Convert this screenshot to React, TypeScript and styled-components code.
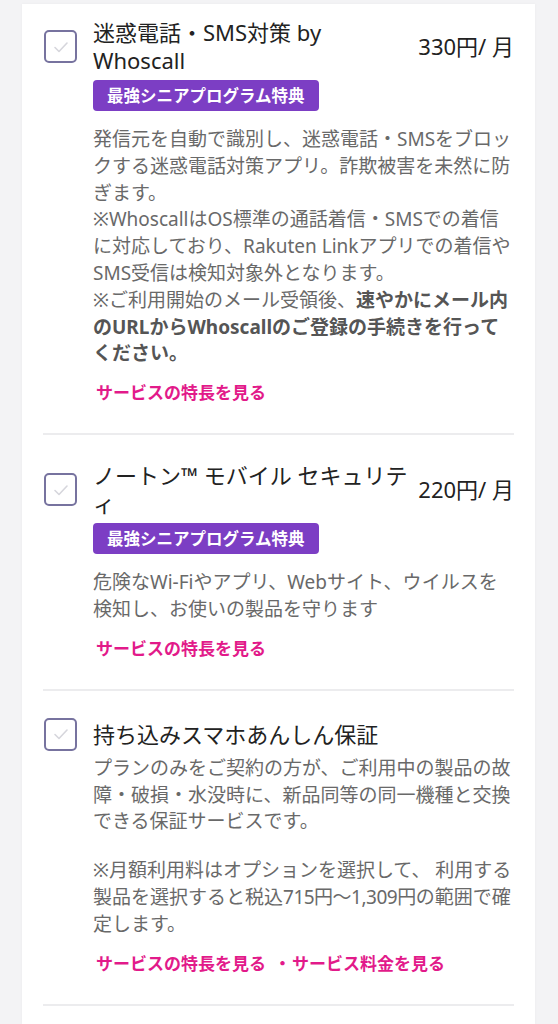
import React from 'react';
import styled, { createGlobalStyle } from 'styled-components';

const GlobalStyle = createGlobalStyle`
  html, body {
    margin: 0;
    padding: 0;
    background: #f3f3f5;
  }
  body {
    font-family: "Noto Sans", "Noto Sans CJK JP", sans-serif;
    -webkit-font-smoothing: antialiased;
  }
`;

const Page = styled.div`
  padding: 4px 23px 0 22px;
`;

const Card = styled.div`
  background: #fff;
  padding: 0 21px;
  min-height: calc(100vh - 4px);
  box-shadow: 0 0 3px rgba(0, 0, 0, 0.04);
`;

const Item = styled.div<{ first?: boolean }>`
  padding: ${props => (props.first ? '15px' : '27px')} 0 28px;
  border-bottom: 2px solid #ececee;
`;

const Header = styled.div`
  display: flex;
  align-items: center;
`;

const CheckboxBox = styled.div`
  flex-shrink: 0;
  box-sizing: border-box;
  width: 33px;
  height: 33px;
  margin-left: 1px;
  margin-right: 16px;
  border: 2px solid #77739f;
  border-radius: 5px;
  display: flex;
  align-items: center;
  justify-content: center;
`;

const Title = styled.div`
  flex: 1;
  font-size: 22px;
  line-height: 27.5px;
  color: #222;
  padding-right: 8px;
`;

const Price = styled.div`
  flex-shrink: 0;
  font-size: 22px;
  line-height: 27.5px;
  color: #222;
`;

const Body = styled.div`
  margin-left: 50px;
`;

const Badge = styled.div`
  display: inline-block;
  margin-top: 6px;
  padding: 0 14px;
  height: 31px;
  line-height: 31px;
  background: #7c3ec4;
  color: #fff;
  font-size: 16.5px;
  font-weight: 700;
  border-radius: 4px;
`;

const Desc = styled.div<{ tight?: boolean }>`
  margin-top: ${props => (props.tight ? '4px' : '15px')};
  font-size: 19px;
  line-height: 26.8px;
  color: #696969;

  p {
    margin: 0;
  }
  p + p {
    margin-top: 22px;
  }
  strong {
    color: #555;
    font-weight: 700;
  }
`;

const Num = styled.span`
  letter-spacing: -0.5px;
`;

const Links = styled.div`
  margin-top: 13px;
  font-size: 17px;
  line-height: 25px;
  font-weight: 700;
  color: #e21a8a;
  padding-left: 3px;
`;

const Link = styled.a`
  color: inherit;
  text-decoration: none;
`;

const Sep = styled.span`
  margin: 0 1px 0 8px;
`;

const Check = () => (
  <svg width="20" height="20" viewBox="0 0 20 20" fill="none">
    <path d="M4 10.5 L8 14.5 L16 6" stroke="#d6d6dc" strokeWidth="1.6" strokeLinecap="round" strokeLinejoin="round" />
  </svg>
);

type OptionProps = {
  first?: boolean;
  title: React.ReactNode;
  price?: string;
  badge?: string;
  children: React.ReactNode;
  tight?: boolean;
  links: string[];
};

const OptionItem = ({ first, title, price, badge, children, tight, links }: OptionProps) => (
  <Item first={first}>
    <Header>
      <CheckboxBox>
        <Check />
      </CheckboxBox>
      <Title>{title}</Title>
      {price && <Price>{price}</Price>}
    </Header>
    <Body>
      {badge && <Badge>{badge}</Badge>}
      <Desc tight={tight}>{children}</Desc>
      <Links>
        {links.map((l, i) => (
          <React.Fragment key={l}>
            {i > 0 && <Sep>・</Sep>}
            <Link href="#">{l}</Link>
          </React.Fragment>
        ))}
      </Links>
    </Body>
  </Item>
);

export default function App() {
  return (
    <>
      <GlobalStyle />
      <Page>
        <Card>
          <OptionItem
            first
            title="迷惑電話・SMS対策 by Whoscall"
            price="330円/ 月"
            badge="最強シニアプログラム特典"
            links={['サービスの特長を見る']}
          >
            発信元を自動で識別し、迷惑電話・SMSをブロックする迷惑電話対策アプリ。詐欺被害を未然に防ぎます。
            <br />
            ※WhoscallはOS標準の通話着信・SMSでの着信に対応しており、Rakuten Linkアプリでの着信やSMS受信は検知対象外となります。
            <br />
            ※ご利用開始のメール受領後、<strong>速やかにメール内のURLからWhoscallのご登録の手続きを行ってください。</strong>
          </OptionItem>
          <OptionItem
            title="ノートン™ モバイル セキュリティ"
            price="220円/ 月"
            badge="最強シニアプログラム特典"
            links={['サービスの特長を見る']}
          >
            危険なWi-Fiやアプリ、Webサイト、ウイルスを検知し、お使いの製品を守ります
          </OptionItem>
          <OptionItem
            title="持ち込みスマホあんしん保証"
            tight
            links={['サービスの特長を見る', 'サービス料金を見る']}
          >
            <p>プランのみをご契約の方が、ご利用中の製品の故障・破損・水没時に、新品同等の同一機種と交換できる保証サービスです。</p>
            <p>
              ※月額利用料はオプションを選択して、 利用する製品を選択すると税込<Num>715円〜1,309円</Num>の範囲で確定します。
            </p>
          </OptionItem>
        </Card>
      </Page>
    </>
  );
}
